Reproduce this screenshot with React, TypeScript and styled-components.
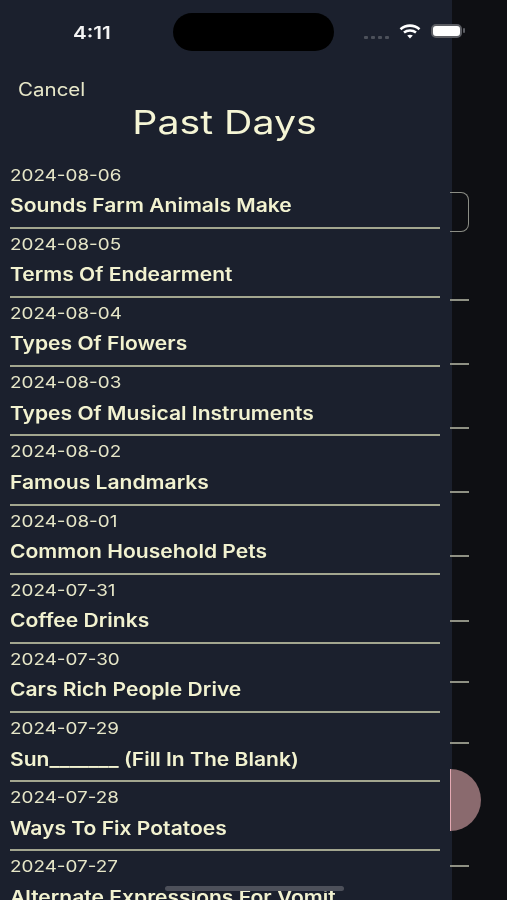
import React from "react";
import styled, { createGlobalStyle } from "styled-components";

const days = [
  { date: "2024-08-06", title: "Sounds Farm Animals Make" },
  { date: "2024-08-05", title: "Terms Of Endearment" },
  { date: "2024-08-04", title: "Types Of Flowers" },
  { date: "2024-08-03", title: "Types Of Musical Instruments" },
  { date: "2024-08-02", title: "Famous Landmarks" },
  { date: "2024-08-01", title: "Common Household Pets" },
  { date: "2024-07-31", title: "Coffee Drinks" },
  { date: "2024-07-30", title: "Cars Rich People Drive" },
  { date: "2024-07-29", title: "Sun_______ (Fill In The Blank)" },
  { date: "2024-07-28", title: "Ways To Fix Potatoes" },
  { date: "2024-07-27", title: "Alternate Expressions For Vomit" },
];

const tickGaps = [67, 62, 62, 62, 62, 63, 59, 59, 121];

export default function App() {
  return (
    <Screen>
      <GlobalStyle />
      <Sheet>
        <StatusBar>
          <Clock>4:11</Clock>
          <Island />
          <StatusIcons>
            <SignalDots>
              <i />
              <i />
              <i />
              <i />
            </SignalDots>
            <svg width="22" height="15" viewBox="0 0 22 15" fill="none">
              <path d="M1.5 5.2C7 0.4 15 0.4 20.5 5.2" stroke="#fff" strokeWidth="2.6" />
              <path d="M5 8.6C8.4 5.8 13.6 5.8 17 8.6" stroke="#fff" strokeWidth="2.6" />
              <path d="M8.2 11.6C9.8 10.4 12.2 10.4 13.8 11.6L11 14.6Z" fill="#fff" />
            </svg>
            <Battery />
          </StatusIcons>
        </StatusBar>
        <CancelLink>Cancel</CancelLink>
        <Title>Past Days</Title>
        <DayList>
          {days.map((day) => (
            <DayRow key={day.date}>
              <DayDate>{day.date}</DayDate>
              <DayTitle>{day.title}</DayTitle>
            </DayRow>
          ))}
        </DayList>
      </Sheet>
      <BehindPage>
        <OutlinedField />
        {tickGaps.map((gap, i) => (
          <Tick key={i} $gap={gap} />
        ))}
        <RecordDot />
      </BehindPage>
      <HomeIndicator />
    </Screen>
  );
}

const GlobalStyle = createGlobalStyle`
  html, body {
    margin: 0;
    padding: 0;
    background: #0e0f13;
  }
`;

const Screen = styled.div`
  position: relative;
  display: flex;
  width: 507px;
  height: 900px;
  overflow: hidden;
  background: #0e0f13;
  font-family: Inter, "Liberation Sans", sans-serif;
  filter: blur(0.35px);
`;

const Sheet = styled.div`
  width: 452px;
  height: 900px;
  flex-shrink: 0;
  background: #1b202d;
  color: #f2f2d0;
`;

const StatusBar = styled.div`
  display: flex;
  align-items: center;
  height: 38px;
  padding-top: 13px;
`;

const Clock = styled.div`
  flex-shrink: 0;
  width: 40px;
  margin-left: 73px;
  font-size: 17.5px;
  font-weight: 600;
  color: #f4f4f4;
  transform: scaleX(1.18);
  transform-origin: left center;
`;

const Island = styled.div`
  flex-shrink: 0;
  width: 161px;
  height: 38px;
  margin-left: 60px;
  border-radius: 19px;
  background: #000;
`;

const StatusIcons = styled.div`
  display: flex;
  align-items: center;
  flex-shrink: 0;
  width: 104px;
  margin-left: 30px;
  gap: 10px;
  margin-top: -2px;
`;

const SignalDots = styled.div`
  display: flex;
  gap: 3px;
  margin-top: 12px;
  i {
    display: block;
    width: 4px;
    height: 3px;
    border-radius: 1px;
    background: #4c505a;
  }
`;

const Battery = styled.div`
  position: relative;
  box-sizing: border-box;
  flex-shrink: 0;
  width: 31px;
  height: 14px;
  border-radius: 5px;
  border: 2px solid #5b5d63;
  background: #fff;
  &::after {
    content: "";
    position: absolute;
    right: -5px;
    top: 2px;
    width: 2px;
    height: 5px;
    border-radius: 1px;
    background: #5b5d63;
  }
`;

const CancelLink = styled.div`
  margin: 27px 0 0 18px;
  font-size: 18px;
  line-height: 23px;
  color: #e6e6c8;
  transform: scaleX(1.14);
  transform-origin: left center;
`;

const Title = styled.h1`
  width: 449px;
  margin: 0;
  text-align: center;
  font-size: 33px;
  line-height: 42px;
  font-weight: 400;
  color: #f5f5d5;
  transform: scaleX(1.19);
`;

const DayList = styled.div`
  margin: 19.6px 12px 0 10px;
`;

const DayRow = styled.div`
  box-sizing: border-box;
  height: 66.2px;
  margin-bottom: 3px;
  padding-top: 2px;
  border-bottom: 2px solid #a3a68f;
`;

const DayDate = styled.div`
  font-size: 16.5px;
  line-height: 21px;
  color: #e6e6c8;
  transform: scaleX(1.144);
  transform-origin: left center;
`;

const DayTitle = styled.div`
  margin-top: 7.5px;
  font-size: 18.5px;
  line-height: 24px;
  font-weight: 600;
  white-space: nowrap;
  color: #f2f2d0;
  transform: scaleX(1.138);
  transform-origin: left center;
`;

const BehindPage = styled.div`
  display: flex;
  flex-direction: column;
  align-items: flex-start;
  margin-left: -2px;
  z-index: 1;
`;

const OutlinedField = styled.div`
  box-sizing: border-box;
  width: 19px;
  height: 40px;
  margin-top: 192px;
  border: 1px solid #8b8d85;
  border-left: none;
  border-radius: 0 8px 8px 0;
`;

const Tick = styled.div<{ $gap: number }>`
  width: 19px;
  height: 2px;
  margin-top: ${(p) => p.$gap}px;
  background: #8f9184;
`;

const RecordDot = styled.div`
  position: absolute;
  left: 450px;
  top: 769px;
  width: 31px;
  height: 62px;
  border-radius: 0 31px 31px 0;
  background: #8a6a6e;
  border-left: 1px solid #e3a9b2;
  box-sizing: border-box;
`;

const HomeIndicator = styled.div`
  position: absolute;
  left: 165px;
  top: 886px;
  width: 179px;
  height: 5px;
  border-radius: 3px;
  background: #4d505a;
  z-index: 2;
`;
